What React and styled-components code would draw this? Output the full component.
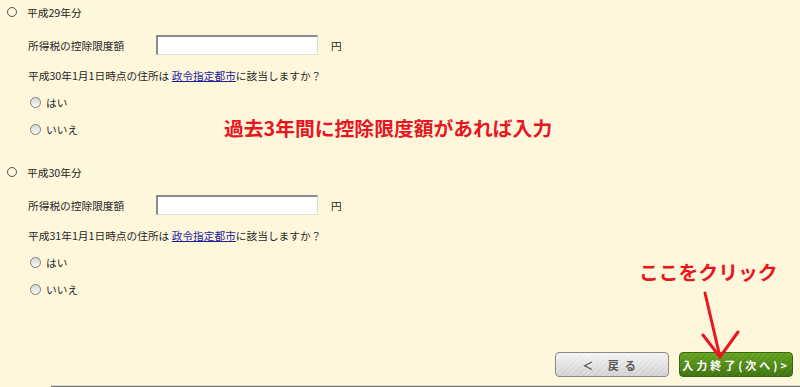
import React from 'react';
import styled, { createGlobalStyle } from 'styled-components';

const GlobalStyle = createGlobalStyle`
  html, body {
    margin: 0;
    padding: 0;
    background: #fff7dc;
  }
`;

const years = [
  { label: '平成29年分', date: '平成30年1月1日時点の住所は' },
  { label: '平成30年分', date: '平成31年1月1日時点の住所は' },
];

const App = () => {
  return (
    <>
      <GlobalStyle />
      <Page>
        {years.map((y) => (
          <YearSection key={y.label}>
            <YearHeader>
              <YearRadio />
              <span>{y.label}</span>
            </YearHeader>
            <FieldRow>
              <FieldLabel>所得税の控除限度額</FieldLabel>
              <AmountInput type="text" />
              <Unit>円</Unit>
            </FieldRow>
            <QuestionRow>
              {y.date} <CityLink href="#">政令指定都市</CityLink>に該当しますか？
            </QuestionRow>
            <ChoiceRow>
              <ChoiceRadio />
              <span>はい</span>
            </ChoiceRow>
            <ChoiceRow>
              <ChoiceRadio />
              <span>いいえ</span>
            </ChoiceRow>
          </YearSection>
        ))}

        <Footer>
          <BackButton>＜ 戻る</BackButton>
          <NextButton>入力終了(次へ)&gt;</NextButton>
        </Footer>
        <BottomLine />

        <Note $top={116} $left={224}>過去3年間に控除限度額があれば入力</Note>
        <Note $top={260} $left={639}>ここをクリック</Note>
        <Arrow viewBox="0 0 50 80" width="50" height="80">
          <path d="M15 8 L30 72" stroke="#e8161e" strokeWidth="3" fill="none" strokeLinecap="round" />
          <path d="M13 50 L30 72 L48 47" stroke="#e8161e" strokeWidth="3" fill="none" strokeLinecap="round" strokeLinejoin="round" />
        </Arrow>
      </Page>
    </>
  );
};

const Page = styled.div`
  position: relative;
  width: 800px;
  height: 387px;
  overflow: hidden;
  background: #fff7dc;
  font-family: "Noto Sans CJK JP", "Noto Sans", sans-serif;
  font-size: 10.7px;
  color: #262626;
  display: flex;
  flex-direction: column;
`;

const YearSection = styled.div`
  display: flex;
  flex-direction: column;
  height: 139px;
  margin-bottom: 21px;
`;

const YearHeader = styled.div`
  display: flex;
  align-items: center;
  height: 24px;
  padding-left: 7px;
  gap: 10px;
`;

const YearRadio = styled.span`
  width: 8px;
  height: 8px;
  border: 1px solid #555;
  border-radius: 50%;
`;

const FieldRow = styled.div`
  display: flex;
  align-items: center;
  height: 20px;
  margin-top: 11px;
  padding-left: 28px;
`;

const FieldLabel = styled.span`
  width: 128px;
`;

const AmountInput = styled.input`
  box-sizing: border-box;
  width: 162px;
  height: 20px;
  margin: 0;
  background: #fff;
  border: 1px solid #dcdcdc;
  border-top: 2px solid #8c8c8c;
  border-left: 2px solid #8c8c8c;
  outline: none;
`;

const Unit = styled.span`
  margin-left: 13px;
`;

const QuestionRow = styled.div`
  display: flex;
  align-items: center;
  height: 20px;
  margin-top: 10px;
  padding-left: 28px;
  white-space: pre;
`;

const CityLink = styled.a`
  color: #1c1c9c;
  text-decoration: underline;
`;

const ChoiceRow = styled.div`
  display: flex;
  align-items: center;
  height: 20px;
  margin-top: 7px;
  padding-left: 30px;
  gap: 5px;
`;

const ChoiceRadio = styled.span`
  box-sizing: border-box;
  width: 11px;
  height: 11px;
  border: 1px solid #7d7d7d;
  border-radius: 50%;
  background: linear-gradient(#d8d8d8, #fafafa);
`;

const Footer = styled.div`
  display: flex;
  justify-content: flex-end;
  gap: 10px;
  margin-top: 32px;
  padding-right: 7px;
`;

const ButtonBase = styled.button`
  box-sizing: border-box;
  width: 114px;
  height: 25px;
  border-radius: 4px;
  font-family: "Noto Sans CJK JP", sans-serif;
  font-size: 11px;
  font-weight: bold;
  letter-spacing: 3px;
  padding: 0;
  cursor: pointer;
`;

const BackButton = styled(ButtonBase)`
  color: #555;
  border: 1px solid #8a8a8a;
  background:
    repeating-linear-gradient(135deg, rgba(255,255,255,0.12) 0 2px, rgba(0,0,0,0.015) 2px 4px),
    linear-gradient(#f6f6f6, #d2d2d2);
  letter-spacing: 6px;
`;

const NextButton = styled(ButtonBase)`
  color: #fff;
  border: 1px solid #3a6610;
  background:
    repeating-linear-gradient(135deg, rgba(255,255,255,0.04) 0 2px, rgba(0,0,0,0.03) 2px 4px),
    linear-gradient(#66a41e, #3e7610);
  text-align: right;
  padding-right: 2px;
  font-weight: 600;
`;

const BottomLine = styled.div`
  margin-top: 8px;
  margin-left: 51px;
  height: 2px;
  background: #777;
  border-top: 1px solid #d8d8c8;
`;

const Note = styled.div`
  position: absolute;
  top: ${(p) => p.$top}px;
  left: ${(p) => p.$left}px;
  color: #e8161e;
  font-size: 19.8px;
  font-weight: bold;
  line-height: 24px;
  white-space: nowrap;
`;

const Arrow = styled.svg`
  position: absolute;
  top: 285px;
  left: 690px;
`;

export default App;
